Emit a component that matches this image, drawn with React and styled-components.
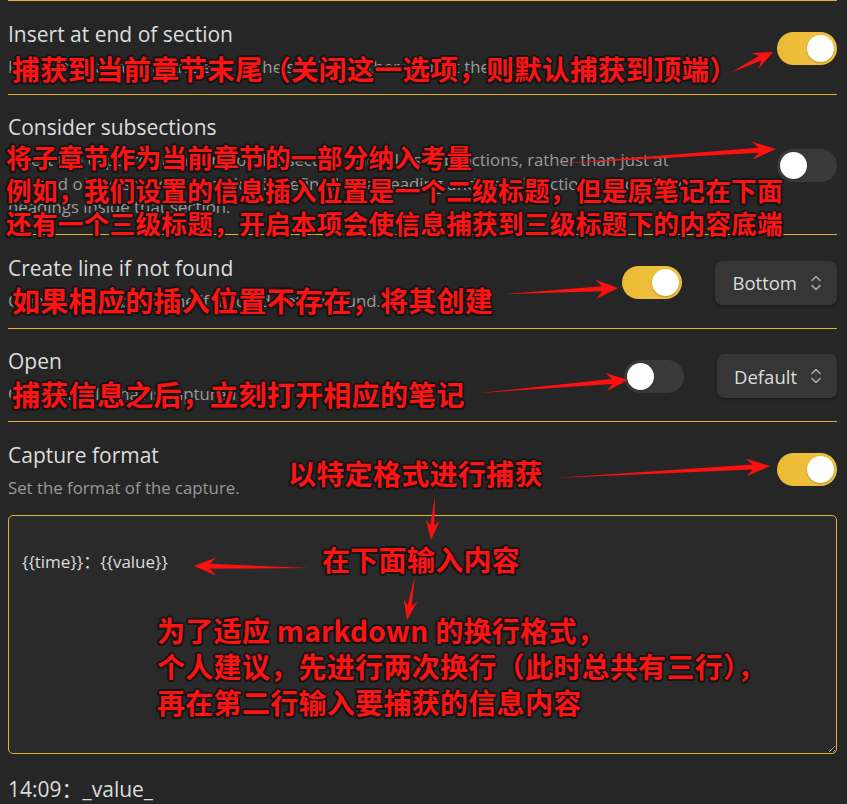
import React from 'react';
import styled, { createGlobalStyle } from 'styled-components';

const GlobalStyle = createGlobalStyle`
    body {
        margin: 0;
        background: #262626;
    }
`;

const Page = styled.div`
    position: relative;
    box-sizing: border-box;
    width: 847px;
    min-height: 804px;
    padding: 0 10px 0 8px;
    font-family: 'Open Sans', 'Noto Sans', 'Noto Sans CJK SC', sans-serif;
    color: #dcddde;
    overflow: hidden;
`;

const SettingItem = styled.div`
    display: flex;
    align-items: center;
    gap: 32px;
    padding: 18.5px 0 15.5px;
    border-top: 1px solid #e3b22c;
`;

const Info = styled.div`
    flex: 1;
    min-width: 0;
`;

const Name = styled.div`
    font-size: 21px;
    line-height: 28px;
    color: #dcddde;
`;

const Desc = styled.div`
    margin-top: 7px;
    font-size: 16.8px;
    line-height: 23.5px;
    color: #9a9a9a;
`;

const Controls = styled.div`
    display: flex;
    align-items: center;
    gap: 33px;
    flex-shrink: 0;
`;

const Toggle = styled.div`
    box-sizing: border-box;
    display: flex;
    justify-content: ${(p) => (p.$on ? 'flex-end' : 'flex-start')};
    align-items: center;
    width: 60px;
    height: 33px;
    padding: 3px;
    border-radius: 17px;
    background: ${(p) => (p.$on ? 'linear-gradient(90deg, #ebbb36, #f2c33f)' : '#3a3a3a')};
`;

const Knob = styled.span`
    width: 27px;
    height: 27px;
    border-radius: 50%;
    background: #fff;
    box-shadow: 0 1px 2px rgba(0, 0, 0, 0.25);
`;

const Select = styled.div`
    display: flex;
    align-items: center;
    gap: 13px;
    height: 44px;
    padding: 0 15px 0 17px;
    border-radius: 7px;
    background: #363636;
    box-shadow: 0 1px 3px rgba(0, 0, 0, 0.45);
    font-size: 18.5px;
    color: #dcddde;
    svg {
        display: block;
    }
`;

const FormatArea = styled.textarea`
    display: block;
    box-sizing: border-box;
    width: 100%;
    height: 239px;
    margin: 0;
    padding: 10px 13px;
    border: 1px solid #e3b22c;
    border-radius: 5px;
    background: #2a2a2a;
    color: #dcddde;
    font-family: 'Open Sans', 'Noto Sans CJK SC', sans-serif;
    font-size: 17px;
    line-height: 24px;
    resize: vertical;
    outline: none;
    color-scheme: dark;
`;

const Preview = styled.div`
    margin-top: 21px;
    font-size: 21px;
    line-height: 28px;
    color: #dcddde;
    font-family: 'Open Sans', 'Noto Sans CJK SC', sans-serif;
`;

const Note = styled.div`
    position: absolute;
    left: ${(p) => p.$x}px;
    top: ${(p) => p.$y}px;
    font-family: 'Noto Sans CJK SC', 'Noto Sans', sans-serif;
    font-weight: 700;
    font-size: ${(p) => p.$size || 28}px;
    letter-spacing: 0.3px;
    line-height: ${(p) => p.$lh || 33}px;
    color: #ff1212;
    white-space: nowrap;
    text-shadow: -2px 0 #151515, 2px 0 #151515, 0 -2px #151515, 0 2px #151515,
        -1.5px -1.5px #151515, 1.5px -1.5px #151515, -1.5px 1.5px #151515, 1.5px 1.5px #151515;
`;

const ArrowLayer = styled.svg`
    position: absolute;
    left: 0;
    top: 0;
    pointer-events: none;
`;

const Chevrons = () => (
    <svg width='12' height='20' viewBox='0 0 12 20' fill='none' stroke='#a8a8a8' strokeWidth='1.6' strokeLinecap='round' strokeLinejoin='round'>
        <path d='M2 7.5 L6 3.5 L10 7.5' />
        <path d='M2 12.5 L6 16.5 L10 12.5' />
    </svg>
);

// tapered arrow: thin tail, barbed head at the tip
const arrowPoints = ([x1, y1, x2, y2], head = 24, headW = 18, shaft = 5) => {
    const dx = x2 - x1;
    const dy = y2 - y1;
    const len = Math.hypot(dx, dy);
    const ux = dx / len;
    const uy = dy / len;
    const nx = -uy;
    const ny = ux;
    const bx = x2 - ux * head;
    const by = y2 - uy * head;
    const kx = x2 - ux * head * 0.72;
    const ky = y2 - uy * head * 0.72;
    const pts = [
        [x1, y1],
        [kx + (nx * shaft) / 2, ky + (ny * shaft) / 2],
        [bx + (nx * headW) / 2, by + (ny * headW) / 2],
        [x2, y2],
        [bx - (nx * headW) / 2, by - (ny * headW) / 2],
        [kx - (nx * shaft) / 2, ky - (ny * shaft) / 2],
    ];
    return pts.map((p) => p.map((v) => v.toFixed(1)).join(',')).join(' ');
};

const arrows = [
    { line: [730, 73, 773, 52], head: 20, headW: 17 },
    { line: [555, 164, 776, 149] },
    { line: [505, 294, 618, 288], head: 22, headW: 19 },
    { line: [479, 393, 628, 380], head: 22, headW: 18 },
    { line: [555, 478, 770, 466] },
    { line: [435, 496, 431, 540], head: 20, headW: 14, shaft: 4 },
    { line: [310, 568, 194, 566], head: 22, headW: 18 },
    { line: [415, 576, 407, 620], head: 20, headW: 14, shaft: 4 },
];

const App = () => {
    return (
        <>
            <GlobalStyle />
            <Page>
                <SettingItem>
                    <Info>
                        <Name>Insert at end of section</Name>
                        <Desc>Insert the capture at the end of the section, rather than at the top.</Desc>
                    </Info>
                    <Controls>
                        <Toggle $on><Knob /></Toggle>
                    </Controls>
                </SettingItem>

                <SettingItem>
                    <Info>
                        <Name>Consider subsections</Name>
                        <Desc>
                            Insert the capture at the end of the section and all its subsections, rather than just at<br />
                            the end of the section. A section is defined by a heading and its subsections, and all the<br />
                            headings inside that section.
                        </Desc>
                    </Info>
                    <Controls>
                        <Toggle><Knob /></Toggle>
                    </Controls>
                </SettingItem>

                <SettingItem>
                    <Info>
                        <Name>Create line if not found</Name>
                        <Desc>Creates the capture line if it could not be found.</Desc>
                    </Info>
                    <Controls>
                        <Toggle $on><Knob /></Toggle>
                        <Select>
                            <span>Bottom</span>
                            <Chevrons />
                        </Select>
                    </Controls>
                </SettingItem>

                <SettingItem>
                    <Info>
                        <Name>Open</Name>
                        <Desc>Open the file that is captured to.</Desc>
                    </Info>
                    <Controls>
                        <Toggle><Knob /></Toggle>
                        <Select>
                            <span>Default</span>
                            <Chevrons />
                        </Select>
                    </Controls>
                </SettingItem>

                <SettingItem>
                    <Info>
                        <Name>Capture format</Name>
                        <Desc>Set the format of the capture.</Desc>
                    </Info>
                    <Controls>
                        <Toggle $on><Knob /></Toggle>
                    </Controls>
                </SettingItem>

                <FormatArea defaultValue={'\n{{time}}：{{value}}\n'} spellCheck={false} />

                <Preview>14:09：_value_</Preview>

                <ArrowLayer width='847' height='804' viewBox='0 0 847 804'>
                    {arrows.map((a, i) => (
                        <polygon key={i} points={arrowPoints(a.line, a.head, a.headW, a.shaft)} fill='#ff1010' />
                    ))}
                </ArrowLayer>

                <Note $x={12} $y={52} $size={27.6}>捕获到当前章节末尾（关闭这一选项，则默认捕获到顶端）</Note>
                <Note $x={6} $y={140} $size={25.6}>
                    将子章节作为当前章节的一部分纳入考量<br />
                    例如，我们设置的信息插入位置是一个二级标题，但是原笔记在下面<br />
                    还有一个三级标题，开启本项会使信息捕获到三级标题下的内容底端
                </Note>
                <Note $x={12} $y={284}>如果相应的插入位置不存在，将其创建</Note>
                <Note $x={12} $y={378}>捕获信息之后，立刻打开相应的笔记</Note>
                <Note $x={288} $y={457}>以特定格式进行捕获</Note>
                <Note $x={322} $y={543}>在下面输入内容</Note>
                <Note $x={157} $y={612} $lh={36}>
                    为了适应 markdown 的换行格式，<br />
                    个人建议，先进行两次换行（此时总共有三行），<br />
                    再在第二行输入要捕获的信息内容
                </Note>
            </Page>
        </>
    );
};

export default App;
